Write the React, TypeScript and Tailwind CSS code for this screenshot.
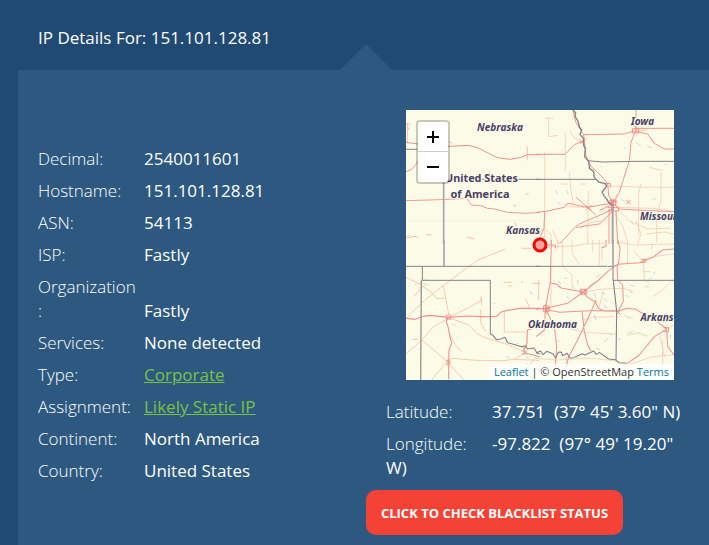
import type { ReactNode } from "react";

const details: { label: string; value: string; link?: boolean }[] = [
  { label: "Decimal:", value: "2540011601" },
  { label: "Hostname:", value: "151.101.128.81" },
  { label: "ASN:", value: "54113" },
  { label: "ISP:", value: "Fastly" },
  { label: "Organization:", value: "Fastly" },
  { label: "Services:", value: "None detected" },
  { label: "Type:", value: "Corporate", link: true },
  { label: "Assignment:", value: "Likely Static IP", link: true },
  { label: "Continent:", value: "North America" },
  { label: "Country:", value: "United States" },
];

function DetailRow({ label, value, link }: { label: string; value: string; link?: boolean }) {
  return (
    <li className="flex items-end py-1">
      <span className="w-[98px] mr-2 shrink-0 break-words font-light">{label}</span>
      {link ? (
        <a href="#" className="text-[#7ac143] underline">{value}</a>
      ) : (
        <span className="font-medium">{value}</span>
      )}
    </li>
  );
}

function Coordinate({ label, children }: { label: string; children: ReactNode }) {
  return (
    <li className="py-1">
      <span className="inline-block w-[106px] font-light">{label}</span>
      <span className="font-medium">{children}</span>
    </li>
  );
}

// Each quadrant of the map is drawn at three units per pixel.
function MapDrawing() {
  return (
    <svg className="block h-[270px] w-[268px]" viewBox="406 110 268 270" fill="none" strokeLinejoin="round">
      <rect x="406" y="110" width="268" height="270" fill="#fcfbe7" />

      {/* north west */}
      <g transform="translate(400 104) scale(.33333)">
        <path d="M18 350H420" stroke="#e9eeea" strokeWidth="2" />
        <path d="M22 56v62M18 60h14M382 127v42M20 402l20-5 15 3M80 392h14M200 400l22 4M345 355l5 12M26 70v8" stroke="#f4bfa4" strokeWidth="3" />
        <path d="M18 115L60 121L145 127L205 124L230 130L262 146L292 161L330 166L365 160L382 152H420" stroke="#ef8d88" strokeWidth="3" />
        <path d="M18 203L35 196L50 178L65 155M18 290L120 287L200 283L215 303L243 305L262 313L285 315L322 325L380 328L420 325" stroke="#ef9a92" strokeWidth="3" />
        <path d="M18 136H52M130 226H420" stroke="#85828a" strokeWidth="3" />
        <path d="M131 226V420" stroke="#aaa6aa" strokeWidth="5" />
        <path d="M146 113l12 5M376 270h10M340 305h10M22 395h7" stroke="#b9d9e7" strokeWidth="3" />
      </g>

      {/* north east */}
      <g transform="translate(536 104) scale(.33333)">
        <path d="M38 38V98L65 94M28 43h24M26 145V410M88 85V200M101 80l13 20 20 15M300 30V75M282 60l35 20M305 82l30-5M100 205L105 260L112 300M215 246L280 248L330 250H414M375 205V290L362 340V415M240 310L350 313L414 322M315 240L308 265V395M240 270L245 315L280 350L335 375L405 372M235 330L260 365L275 415M0 395L22 373L45 390V420M85 300L100 308L155 310M157 260L155 420M70 420L50 380M300 350L315 390L305 420M130 375L165 355L210 350M330 390L385 384L414 390M75 240h20M135 240h15M340 190l40 10" stroke="#f6ccb2" strokeWidth="2.5" />
        <path d="M110 18L120 55L137 83L143 92L265 90L297 80L305 73H414M300 18V80M299 80L285 115L280 170L250 265L232 295M143 92L150 155L165 187L190 210L215 238L218 275L232 297M0 151H88L115 122L140 112M0 325L30 322L85 310L95 298L155 310L200 302L232 297M70 420L125 362L205 328L232 312M120 370L190 360L232 320M232 300L250 315L300 318L414 323M219 315V420M240 320L245 420M297 82L335 90L355 118L385 135H414M232 300L190 320M10 405L24 373L26 325M120 280L160 315L180 335" stroke="#ef9690" strokeWidth="3" />
        <path d="M222 288h17v15h-17zM227 286v35M232 286v37M222 294h21M215 311h32v10h-32M130 105l17 18M133 120l18-18M289 74h19v13h-19zM151 305l15 14M151 318l15-15M208 238h15v12M270 288l14 12M272 300l12-12" stroke="#ef807a" strokeWidth="2.5" />
        <path d="M153 170L200 174L300 172H414M0 226H180" stroke="#85828a" strokeWidth="3" />
        <path d="M112 18L119 27L117 37L126 51L130 69L137 78L132 91L142 103L143 124L148 134L146 158L158 172L161 194L173 202L175 220L188 234L208 239L212 247L198 264L205 277L213 286L218 296L230 303" stroke="#858087" strokeWidth="4" />
        <path d="M230 303V420" stroke="#aaa2a5" strokeWidth="6" />
        <path d="M58 258l6 12M65 293l8 10M92 258l5 13M255 286l10 5M285 353l8 10M300 113l15 15M335 126l13 7M193 185l6 5M385 180l8 3M350 285h10M265 130l4 5" stroke="#b9d9e7" strokeWidth="2.5" />
      </g>

      {/* south west */}
      <g transform="translate(400 240) scale(.33333)">
        <path d="M43 135l20-7 20 5M54 145l12-5M73 118l18 5M155 251l15 8M170 293h7M60 128l28 8" stroke="#e9f1d0" strokeWidth="5" />
        <path d="M18 112L65 135L102 165L109 175H136M18 235L75 180L130 137L185 95L235 60L275 43L315 28M365 25H395M130 135L137 175L148 231M148 234L100 260L66 300L20 340M66 300L142 365L190 418M148 232L205 203L245 182L243 172M242 170L245 195M148 234L207 255L230 280L252 292L320 313L372 335M242 208V247L257 275M150 285L165 313L184 335M142 365L95 419M144 366L154 355L230 361L310 362L340 358L420 361M313 212V276H375M310 127H337M325 138h10M376 175L390 205M416 120V180M395 130h25M410 350L365 400M55 298H38M40 170L75 135M372 340L340 360" stroke="#f5c5aa" strokeWidth="2.7" />
        <path d="M18 235L47 238L65 230L90 226L145 232L205 228L245 230L290 229L302 217L322 211L360 205H420M143 234L139 245L144 260L150 290L155 310L147 330L146 366V418M372 330L381 310L382 270L400 265M372 338L420 350" stroke="#ee918c" strokeWidth="3.3" />
        <path d="M139 225h13v13h-13zM138 362h12v10h-12M366 333h13v9h-13M144 355v22M372 322v22" stroke="#ef918b" strokeWidth="2.5" />
        <path d="M18 79H420M67 79V121M64 121H271V282" stroke="#85828a" strokeWidth="3" />
        <path d="M132 0V79" stroke="#aaa6aa" strokeWidth="5" />
        <path d="M64 121L62 420" stroke="#97939a" strokeWidth="4" />
        <path d="M271 282L279 286L289 299L302 297L315 292L323 308L345 314L365 320L377 318L382 327L402 324L411 339L420 342" stroke="#858087" strokeWidth="3.3" />
        <path d="M363 126h6M393 155v8M318 350l10 4M378 352h8M281 190h5M350 310h6M380 370l6 5" stroke="#b9d9e7" strokeWidth="3" />
      </g>

      {/* south east */}
      <g transform="translate(536 240) scale(.33333)">
        <path d="M273 285l35-7 12 7M276 280l15-7M265 225l12 7M326 140h14M315 282l20 6M270 165l10 7M274 235l16-3" stroke="#e6efcc" strokeWidth="6" />
        <path d="M80 0V80L108 105V150M108 0V40L130 75M190 0V75M0 35L45 20L110 18L150 12L205 10M170 0V35M45 80V200M60 260L105 267L150 278L240 282M145 156L200 147L260 145L292 155M275 0V70M245 5L290 15L414 12M322 60L325 120L340 128M295 35L320 62M350 170L380 150L405 125M140 240L170 232L235 230M0 355L60 360L170 354L250 365M275 375L350 350L414 345M370 280L385 350M380 300L380 380M392 267L414 255M0 270L20 240M55 120v15M198 30v30M205 145L188 205M65 0V25M160 180L185 187M320 60L365 48L414 42M90 380L92 345M255 365L270 380L240 400M345 30L350 12M322 95h20" stroke="#f6ccb2" strokeWidth="2.5" />
        <path d="M46 0L43 125L28 205L55 260L62 320L58 380M0 208L28 205L95 190L142 156L188 120L218 92L245 73L310 68L350 52L380 30L414 27M45 130L62 132L75 144L142 156L155 172L178 185L187 205L205 213L248 214M28 208L70 217L160 212L248 212L275 205L300 208L322 222L355 238L392 267M180 180L165 215L125 300L98 350L90 382M138 212L145 275L155 315L165 333M245 0L252 25L247 75L232 78M243 75L245 120L260 135L262 185L248 210M392 267L355 290L310 345L270 373M392 267L395 320L414 345M0 290L25 270L28 205M210 0V18L195 25" stroke="#ee9590" strokeWidth="3.1" />
        <path d="M133 149h19v13h-19zM137 145v18M147 145v18M22 198h17v16H22zM30 193v30M18 206h25M240 210l14 14M241 224l12-13M383 263h15v12h-15M315 58h13v9h-13M35 15h23v10" stroke="#ef807a" strokeWidth="2.5" />
        <path d="M0 79H231V121H414" stroke="#85828a" strokeWidth="3" />
        <path d="M231 0V80" stroke="#aaa2a5" strokeWidth="5" />
        <path d="M232 121L242 215L240 362M0 339L14 333L21 344L32 334L50 341L59 354L67 337L76 336L80 347L93 340L102 354L112 353L139 341L147 345L173 333L181 343L190 337L218 357L238 359L249 368L270 369" stroke="#807e87" strokeWidth="3.2" />
        <path d="M65 122l10 10M86 115h8M160 137l15-10M180 115l15-15M196 158l12 5M205 175l8 9M112 140l5 8M173 158l8 15M203 197l12 8M280 152l8 8M337 119l12-6M155 235l10 10M175 225l5 15M220 280l8 7M205 305l10-8M180 325l12 4M65 300l5 8M110 355l18-5M370 278l8 8M403 285v12M245 300l10-5M125 120v10M92 170l7 5M210 75l7 8M283 135l11 4M355 95v8" stroke="#b9dce6" strokeWidth="3" />
      </g>

      <g
        fill="#493f68"
        stroke="#fcfbe7"
        strokeWidth="2"
        paintOrder="stroke"
        className="font-['Noto_Sans','Open_Sans',sans-serif] text-[10px] font-bold"
      >
        <g className="italic">
          <text x="477" y="131" textLength="46" lengthAdjust="spacingAndGlyphs">Nebraska</text>
          <text x="631" y="125" textLength="23" lengthAdjust="spacingAndGlyphs">Iowa</text>
          <text x="506" y="233.5" textLength="34" lengthAdjust="spacingAndGlyphs">Kansas</text>
          <text x="640" y="220" textLength="40" lengthAdjust="spacingAndGlyphs">Missouri</text>
          <text x="528" y="328" textLength="49" lengthAdjust="spacingAndGlyphs">Oklahoma</text>
          <text x="640.5" y="321" textLength="33" lengthAdjust="spacingAndGlyphs">Arkans</text>
        </g>
        <g className="text-[11px]">
          <text x="445" y="182" textLength="73" lengthAdjust="spacingAndGlyphs">United States</text>
          <text x="450.5" y="198" textLength="59" lengthAdjust="spacingAndGlyphs">of America</text>
        </g>
      </g>
      <circle cx="540" cy="245" r="6" fill="#fba9a0" stroke="#f00" strokeWidth="3" />
    </svg>
  );
}

function LocationMap() {
  return (
    <div className="relative ml-10 h-[270px] w-[268px] overflow-hidden">
      <MapDrawing />
      <div className="absolute left-[10px] top-[10px] w-[34px] overflow-hidden rounded-[4px] border-2 border-black/20 bg-white bg-clip-padding">
        <button aria-label="Zoom in" className="flex h-[30px] w-full items-center justify-center border-b border-[#ccc]">
          <svg width="12" height="12" viewBox="0 0 12 12"><path d="M6 0v12M0 6h12" stroke="#000" strokeWidth="2" /></svg>
        </button>
        <button aria-label="Zoom out" className="flex h-[30px] w-full items-center justify-center">
          <svg width="12" height="12" viewBox="0 0 12 12"><path d="M0 6h12" stroke="#000" strokeWidth="2" /></svg>
        </button>
      </div>
      <div className="absolute bottom-0 right-0 whitespace-nowrap bg-white/70 px-[5px] text-[11px] leading-[16px] text-[#333]">
        <a href="#" className="text-[#0078a8]">Leaflet</a> | © OpenStreetMap <a href="#" className="text-[#0078a8]">Terms</a>
      </div>
    </div>
  );
}

export default function App() {
  return (
    <div className="flex h-[545px] w-[709px] flex-col overflow-hidden bg-[#204a73] font-['Open_Sans',sans-serif] text-[17px] leading-6 text-white">
      <header className="flex h-[70px] shrink-0 flex-col justify-between pt-[26px]">
        <h1 className="pl-[38px] leading-6">IP Details For: 151.101.128.81</h1>
        <svg className="ml-[340px] block h-[26px] w-[52px] shrink-0 -mt-6" viewBox="0 0 52 26">
          <path d="M0 26L26 0L52 26Z" fill="#2d5980" />
        </svg>
      </header>
      <main className="ml-[18px] flex flex-1 bg-[#2d5980]">
        <ul className="w-[348px] shrink-0 pl-5 pt-[73px]">
          {details.map((d) => (
            <DetailRow key={d.label} {...d} />
          ))}
        </ul>
        <section className="w-[343px] pt-10">
          <LocationMap />
          <ul className="mt-4 w-[320px] pl-5">
            <Coordinate label="Latitude:">37.751&nbsp; (37° 45' 3.60" N)</Coordinate>
            <Coordinate label="Longitude:">-97.822&nbsp; (97° 49' 19.20" W)</Coordinate>
          </ul>
          <button className="mt-[6px] h-[45px] w-[257px] rounded-[10px] bg-[#f44336] text-[13px] font-bold">
            CLICK TO CHECK BLACKLIST STATUS
          </button>
        </section>
      </main>
    </div>
  );
}
